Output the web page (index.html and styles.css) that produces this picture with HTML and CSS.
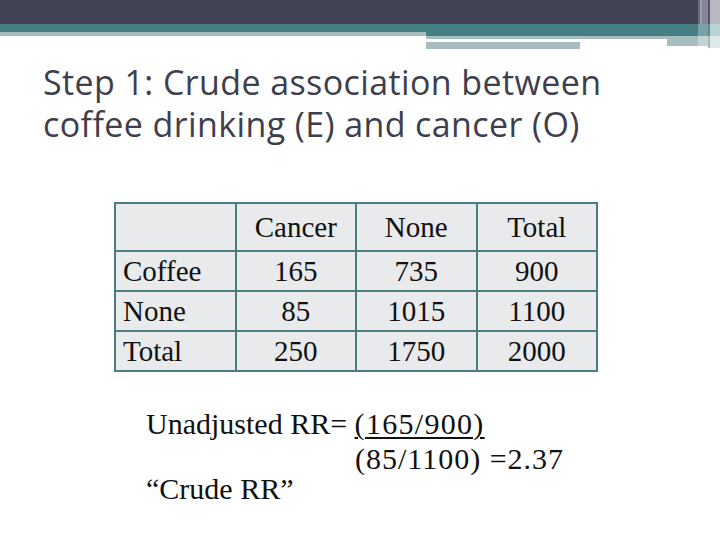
FILE: index.html
```html
<!DOCTYPE html>
<html>
<head>
<meta charset="utf-8">
<link rel="stylesheet" href="styles.css">
</head>
<body>
<div class="slide">
  <svg class="banner" width="720" height="50" viewBox="0 0 720 50" aria-hidden="true">
    <rect x="0" y="0" width="720" height="24" fill="#424354"/>
    <rect x="0" y="24" width="720" height="8" fill="#457f84"/>
    <rect x="0" y="32" width="426" height="4" fill="#a7bec1"/>
    <rect x="426" y="32" width="272" height="4" fill="#457f84"/>
    <rect x="426" y="36" width="272" height="3" fill="#a7bec1"/>
    <rect x="667" y="39" width="31" height="7" fill="#a7bec1"/>
    <rect x="426" y="42" width="154" height="7" fill="#a7bec1"/>
    <rect x="698" y="0" width="2" height="24" fill="#6e6e80"/>
    <rect x="700" y="0" width="2" height="24" fill="#9c9cab"/>
    <rect x="702" y="0" width="6" height="24" fill="#85859a"/>
    <rect x="708" y="0" width="2" height="24" fill="#55556a"/>
    <rect x="710" y="0" width="10" height="24" fill="#b9b9c3"/>
    <rect x="698" y="24" width="10" height="12" fill="#78a3a6"/>
    <rect x="708" y="24" width="2" height="12" fill="#5e8e92"/>
    <rect x="710" y="24" width="10" height="12" fill="#b8d3d4"/>
    <rect x="698" y="36" width="10" height="10" fill="#c3d3d5"/>
    <rect x="708" y="36" width="2" height="12" fill="#a6babd"/>
    <rect x="710" y="36" width="10" height="12" fill="#dde8e8"/>
  </svg>
  <h1 class="title">Step 1: Crude association between<br>coffee drinking (E) and cancer (O)</h1>
  <table class="grid">
    <colgroup>
      <col class="c"><col class="c"><col class="c"><col class="c">
    </colgroup>
    <tr class="head">
      <td class="label"></td><td>Cancer</td><td>None</td><td>Total</td>
    </tr>
    <tr>
      <td class="label">Coffee</td><td>165</td><td>735</td><td>900</td>
    </tr>
    <tr>
      <td class="label">None</td><td>85</td><td>1015</td><td>1100</td>
    </tr>
    <tr>
      <td class="label">Total</td><td>250</td><td>1750</td><td>2000</td>
    </tr>
  </table>
  <div class="calc">
    <div class="line">Unadjusted RR= <span class="num">(165/900)</span></div>
    <div class="line denom">(85/1100) =2.37</div>
    <div class="line note">“Crude RR”</div>
  </div>
</div>
</body>
</html>
```
FILE: styles.css
```css
html, body {
  margin: 0;
  padding: 0;
  background: #ffffff;
}
.slide {
  width: 720px;
  height: 540px;
  overflow: hidden;
  display: flex;
  flex-direction: column;
  align-items: flex-start;
}
.banner {
  display: block;
  flex: none;
}
.title {
  margin: 11px 0 0 43px;
  font-family: "Open Sans", "DejaVu Sans", sans-serif;
  font-weight: normal;
  font-size: 34px;
  line-height: 42px;
  letter-spacing: 0.4px;
  color: #3e3e4c;
  white-space: nowrap;
}
.grid {
  margin: 57px 0 0 114px;
  border-collapse: collapse;
  table-layout: fixed;
  width: 482px;
  font-family: "Liberation Serif", "Times New Roman", serif;
  font-size: 29px;
  color: #111111;
  background: #e8eaec;
}
.grid col.c {
  width: 120.5px;
}
.grid td {
  border: 2px solid #4a7c80;
  height: 38px;
  padding: 0;
  text-align: center;
  vertical-align: middle;
}
.grid .head td {
  height: 46px;
}
.grid td.label {
  text-align: left;
  padding-left: 7px;
}
.calc {
  margin: 34px 0 0 146px;
  font-family: "Liberation Serif", "Times New Roman", serif;
  font-size: 30px;
  line-height: 35px;
  color: #111111;
}
.num {
  letter-spacing: 1.3px;
  text-decoration: underline;
  text-decoration-thickness: 2px;
  text-underline-offset: 3px;
}
.denom {
  padding-left: 209px;
  letter-spacing: 1px;
}
.note {
  line-height: 25px;
  letter-spacing: 0;
}
```
